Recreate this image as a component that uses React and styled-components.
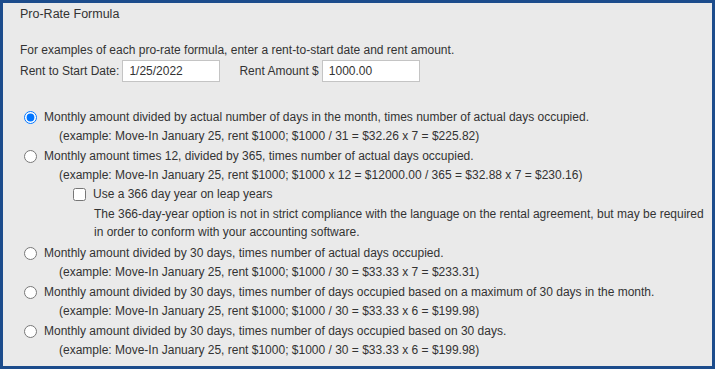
import React from 'react'
import styled, { createGlobalStyle } from 'styled-components'

const GlobalStyle = createGlobalStyle`
    html, body {
        margin: 0;
        padding: 0;
        background: #eaeaea;
    }
    body {
        font-family: "Liberation Sans", Arial, sans-serif;
        font-size: 12px;
        color: #333;
    }
`

const options = [
    {
        id: 'actual',
        label: 'Monthly amount divided by actual number of days in the month, times number of actual days occupied.',
        example: '(example: Move-In January 25, rent $1000; $1000 / 31 = $32.26 x 7 = $225.82)',
        checked: true
    },
    {
        id: 'yearly',
        label: 'Monthly amount times 12, divided by 365, times number of actual days occupied.',
        example: '(example: Move-In January 25, rent $1000; $1000 x 12 = $12000.00 / 365 = $32.88 x 7 = $230.16)',
        leap: true
    },
    {
        id: 'thirty',
        label: 'Monthly amount divided by 30 days, times number of actual days occupied.',
        example: '(example: Move-In January 25, rent $1000; $1000 / 30 = $33.33 x 7 = $233.31)'
    },
    {
        id: 'max30',
        label: 'Monthly amount divided by 30 days, times number of days occupied based on a maximum of 30 days in the month.',
        example: '(example: Move-In January 25, rent $1000; $1000 / 30 = $33.33 x 6 = $199.98)'
    },
    {
        id: 'based30',
        label: 'Monthly amount divided by 30 days, times number of days occupied based on 30 days.',
        example: '(example: Move-In January 25, rent $1000; $1000 / 30 = $33.33 x 6 = $199.98)'
    }
]

const App = () => {
    return (
        <>
            <GlobalStyle />
            <Panel>
                <Title>Pro-Rate Formula</Title>
                <Intro>For examples of each pro-rate formula, enter a rent-to-start date and rent amount.</Intro>
                <RentRow>
                    <Label>Rent to Start Date:</Label>
                    <Field defaultValue="1/25/2022" />
                    <Label $gap>Rent Amount $</Label>
                    <Field defaultValue="1000.00" />
                </RentRow>

                <OptionList>
                    {options.map(opt => (
                        <Option key={opt.id}>
                            <OptionRow>
                                <Radio type="radio" name="prorate" defaultChecked={opt.checked} />
                                <span>{opt.label}</span>
                            </OptionRow>
                            <Example>{opt.example}</Example>
                            {opt.leap && (
                                <Leap>
                                    <LeapRow>
                                        <Check type="checkbox" />
                                        <span>Use a 366 day year on leap years</span>
                                    </LeapRow>
                                    <Note>
                                        The 366-day-year option is not in strict compliance with the language on the rental agreement, but may be required in order to conform with your accounting software.
                                    </Note>
                                </Leap>
                            )}
                        </Option>
                    ))}
                </OptionList>
            </Panel>
        </>
    )
}

export default App

const Panel = styled.section`
    box-sizing: border-box;
    width: 715px;
    height: 369px;
    border: 3px solid #1c4c8c;
    background: #eaeaea;
    padding: 4px 0 0 17px;
`

const Title = styled.h3`
    margin: 0;
    font-size: 12.5px;
    font-weight: 400;
    line-height: 14px;
    color: #333;
`

const Intro = styled.p`
    margin: 22px 0 0;
    line-height: 14px;
`

const RentRow = styled.div`
    display: flex;
    align-items: center;
    margin-top: 3px;
    height: 22px;
`

const Label = styled.label`
    margin-left: ${props => props.$gap ? '19px' : '0'};
    margin-right: 3px;
`

const Field = styled.input`
    box-sizing: border-box;
    width: 98px;
    height: 22px;
    border: 1px solid #c4c4c4;
    background: #fff;
    padding: 0 6px;
    font-family: "Liberation Sans", Arial, sans-serif;
    font-size: 12px;
    color: #333;
    outline: none;
`

const OptionList = styled.div`
    margin-top: 25px;
`

const Option = styled.div`
    margin-bottom: 1px;
`

const OptionRow = styled.div`
    display: flex;
    align-items: center;
    height: 20px;
`

const Radio = styled.input`
    width: 13px;
    height: 13px;
    margin: 0 7px 0 4px;
    accent-color: #0075ff;
`

const Example = styled.div`
    line-height: 18px;
    padding-left: 39px;
`

const Leap = styled.div`
    padding-left: 53px;
    padding-bottom: 1px;
`

const LeapRow = styled.div`
    display: flex;
    align-items: center;
    height: 20px;
`

const Check = styled.input`
    width: 13px;
    height: 13px;
    margin: 0 7px 0 0;
`

const Note = styled.div`
    margin-top: 1px;
    padding-left: 21px;
    line-height: 18px;
`
